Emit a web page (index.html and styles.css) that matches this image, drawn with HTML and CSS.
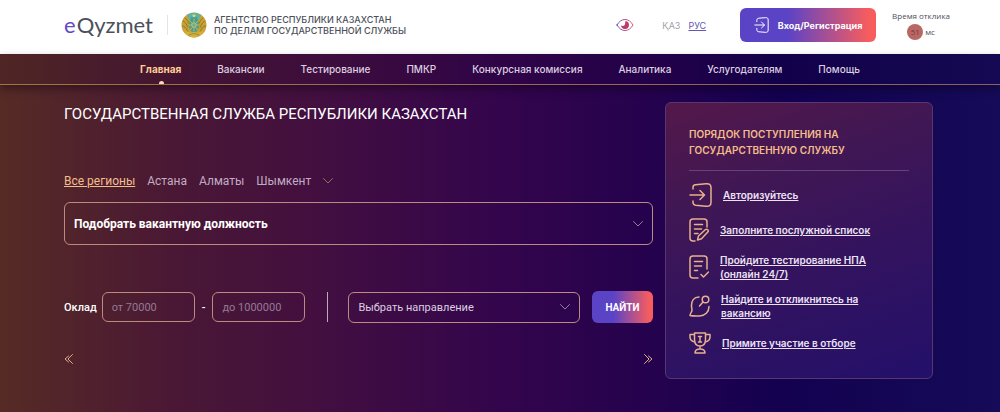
FILE: index.html
```html
<!DOCTYPE html>
<html lang="ru">
<head>
  <meta charset="UTF-8">
  <meta name="viewport" content="width=device-width, initial-scale=1">
  <title>eQyzmet</title>
  <link rel="stylesheet" href="styles.css">
</head>
<body>
  <header class="header">
    <a class="logo" href="#"><span class="logo-e">e</span>Qyzmet</a>
    <div class="agency">
      <svg class="emblem" viewBox="0 0 26 26" aria-hidden="true">
        <circle cx="13" cy="13" r="12.5" fill="#c9a035"/>
        <path d="M6 3.500C10-.2 16-.2 20 3.500L17 8H9z" fill="#55b5ae"/>
        <ellipse cx="13" cy="13" rx="5.500" ry="7.500" fill="#6a9d70"/>
        <path d="M10 5h6l1 9-4 6-4-6z" fill="#3f9f9b"/>
        <path d="M13 7v12M9 9l8 9M17 9l-8 9M8 13h10" stroke="#d8bd55" stroke-width=".8"/>
        <circle cx="13" cy="13" r="2.300" fill="#58b3aa" stroke="#e3c04c" stroke-width=".8"/>
        <path d="M2 9c2 1 4 3 4.500 6M1.500 14c2 0 4 2 5 5M4 6c2 1 3 3 3.500 5M24 9c-2 1-4 3-4.500 6M24.500 14c-2 0-4 2-5 5M22 6c-2 1-3 3-3.500 5" fill="none" stroke="#8f7b22" stroke-width="1"/>
        <path d="M3 17c3 4 6 4 10 3 4 1 7 1 10-3-1.500 5-5 8.500-10 8.500S4.500 22 3 17z" fill="#dcae33"/>
        <path d="M8 23c3-1.500 7-1.500 10 0" fill="none" stroke="#7b9a60" stroke-width="1.200"/>
        <path d="M13 1.500l.7 1.500h1.500l-1.200 1 .4 1.500-1.400-.8-1.400.8.4-1.500-1.200-1h1.500z" fill="#f0d060"/>
      </svg>
      <p class="agency-name">АГЕНТСТВО РЕСПУБЛИКИ КАЗАХСТАН<br>ПО ДЕЛАМ ГОСУДАРСТВЕННОЙ СЛУЖБЫ</p>
    </div>
    <div class="header-tools">
      <button class="eye" type="button" aria-label="Версия для слабовидящих">
        <svg width="18" height="14" viewBox="0 0 18 14" fill="none">
          <defs>
            <linearGradient id="eyeGradient" x1="0" x2="1">
              <stop offset="0" stop-color="#6656b8"/>
              <stop offset="1" stop-color="#dc5570"/>
            </linearGradient>
          </defs>
          <path d="M1 7c2-3.500 4.800-5.500 8-5.500S15 3.500 17 7c-2 3.500-4.800 5.500-8 5.500S3 10.500 1 7z" stroke="url(#eyeGradient)"/>
          <path d="M9.500 3A4 4 0 1 1 5 7.500c1.500.8 2.700.5 3.500-.3C9.500 6.200 9 4.500 9.500 3z" fill="#bd3a68"/>
        </svg>
      </button>
      <nav class="langs">
        <a class="lang" href="#">ҚАЗ</a>
        <a class="lang active" href="#">РУС</a>
      </nav>
      <button class="login" type="button">
        <svg width="15" height="16" viewBox="0 0 22 24" fill="none" stroke="currentColor" stroke-width="1.500" stroke-linecap="round" stroke-linejoin="round">
          <path d="M4 7V5c0-2 1-3 3-3.200l10-.8c3-.2 4 1 4 3.500v15c0 2.500-1 3.700-4 3.500l-10-.8C5 22 4 21 4 19v-2M1 12h14M11 7.500l4.500 4.500-4.500 4.500"/>
        </svg>
        Вход/Регистрация
      </button>
      <div class="response">
        <span>Время отклика</span>
        <span class="response-value"><b class="ms">51</b> мс</span>
      </div>
    </div>
  </header>

  <main class="page">
    <nav class="menu">
      <a class="menu-link active" href="#">Главная</a>
      <a class="menu-link" href="#">Вакансии</a>
      <a class="menu-link" href="#">Тестирование</a>
      <a class="menu-link" href="#">ПМКР</a>
      <a class="menu-link" href="#">Конкурсная комиссия</a>
      <a class="menu-link" href="#">Аналитика</a>
      <a class="menu-link" href="#">Услугодателям</a>
      <a class="menu-link" href="#">Помощь</a>
    </nav>

    <div class="content">
      <section class="search">
        <h1>ГОСУДАРСТВЕННАЯ СЛУЖБА РЕСПУБЛИКИ КАЗАХСТАН</h1>

        <div class="regions">
          <a class="region active" href="#">Все регионы</a>
          <a class="region" href="#">Астана</a>
          <a class="region" href="#">Алматы</a>
          <a class="region" href="#">Шымкент</a>
          <button class="more" type="button" aria-label="Ещё регионы">
            <svg width="10" height="6" viewBox="0 0 10 6"><path d="M.5.5L5 5 9.500.5"/></svg>
          </button>
        </div>

        <div class="select select-position">
          <select aria-label="Вакантная должность">
            <option>Подобрать вакантную должность</option>
          </select>
          <svg width="10" height="6" viewBox="0 0 10 6"><path d="M.5.5L5 5 9.500.5"/></svg>
        </div>

        <form class="filters">
          <div class="salary">
            <label for="from">Оклад</label>
            <input id="from" type="text" placeholder="от 70000">
            <label class="dash" for="to" aria-label="Оклад до">-</label>
            <input id="to" type="text" placeholder="до 1000000">
          </div>
          <div class="divider"></div>
          <div class="select select-direction">
            <select aria-label="Направление">
              <option>Выбрать направление</option>
            </select>
            <svg width="10" height="6" viewBox="0 0 10 6"><path d="M.5.5L5 5 9.500.5"/></svg>
          </div>
          <button class="find" type="submit">НАЙТИ</button>
        </form>

        <div class="pager">
          <button type="button" aria-label="Назад">
            <svg width="9" height="10" viewBox="0 0 9 10"><path d="M4.500 2L1 5l3.500 3M8.500.5L4 5l4.500 4.500"/></svg>
          </button>
          <button type="button" aria-label="Вперёд">
            <svg width="9" height="10" viewBox="0 0 9 10"><path d="M4.500 2L8 5 4.500 8M.5.5L5 5 .5 9.500"/></svg>
          </button>
        </div>
      </section>

      <aside class="steps">
        <h2>ПОРЯДОК ПОСТУПЛЕНИЯ НА ГОСУДАРСТВЕННУЮ СЛУЖБУ</h2>
        <ul>
          <li>
            <svg width="23" height="24" viewBox="0 0 23 24">
              <path d="M4 6V4.500C4 3 5 2 6.500 1.800L17 .8c3-.3 5 .7 5 3.700v15c0 3-2 4-5 3.700l-10.500-1C5 22 4 21 4 19.500V18M1 12h14M11 7.500l4.500 4.500-4.500 4.500"/>
            </svg>
            <a href="#">Авторизуйтесь</a>
          </li>
          <li>
            <svg width="20" height="24" viewBox="0 0 20 24">
              <path d="M18 9V4c0-2-1-3-3-3H4C2 1 1 2 1 4v16c0 2 1 3 3 3h2M5.500 6.500h8M5.500 11h7M5.500 15.500h3.500M8.500 22l1-4 7-6.500c1.500-1 3.500.8 2.500 2.300l-6.500 7z"/>
            </svg>
            <a href="#">Заполните послужной список</a>
          </li>
          <li>
            <svg width="20" height="24" viewBox="0 0 20 24">
              <path d="M18 14V4c0-2-1-3-3-3H4C2 1 1 2 1 4v16c0 2 1 3 3 3h5M5.500 6.500h8M5.500 11h7M5.500 15.500h3M12 19.500l2.500 2.500 5-5"/>
            </svg>
            <a href="#">Пройдите тестирование НПА (онлайн 24/7)</a>
          </li>
          <li>
            <svg width="21" height="22" viewBox="0 0 21 22">
              <path d="M10 2C5 2 2.500 6 2.500 10.500c0 2 .5 3 .5 4.500 0 2-2 3.500-2 5.500 3 .7 6 .5 9.500.5 5.500 0 9.500-4 9.500-9.500M14 7L10.500 11"/>
              <circle cx="16.500" cy="4.500" r="3.300"/>
            </svg>
            <a href="#">Найдите и откликнитесь на вакансию</a>
          </li>
          <li>
            <svg width="22" height="22" viewBox="0 0 22 22">
              <path d="M5.500 1h11v6.500c0 4-2 6.500-5.500 6.500s-5.500-2.500-5.500-6.500zM5.500 2.500H1V5c0 3 2 4.500 5 5M16.500 2.500H21V5c0 3-2 4.500-5 5M11 14v3M6 21c0-2.500 1.500-4 5-4s5 1.500 5 4zM9.500 4.500h3M11 4.500v5.500M9.500 10h3"/>
            </svg>
            <a href="#">Примите участие в отборе</a>
          </li>
        </ul>
      </aside>
    </div>
  </main>
</body>
</html>
```
FILE: styles.css
```css
* {
  box-sizing: border-box;
}
body {
  margin: 0;
  min-height: 100vh;
  display: flex;
  flex-direction: column;
  font-family: Inter, "Noto Sans", sans-serif;
  font-size: 10px;
  color: #fff;
}
a {
  color: inherit;
  text-decoration: none;
}
button, input, select {
  font: inherit;
  color: inherit;
}
button {
  padding: 0;
  border: none;
  background: none;
  cursor: pointer;
}
h1, h2, p, ul {
  margin: 0;
  padding: 0;
}

/* header */
.header {
  display: flex;
  align-items: center;
  height: 54px;
  padding: 0 50px 4px 64px;
  background: #fff;
  color: #4c4f5a;
}
.logo {
  font-family: Lato, sans-serif;
  font-size: 22px;
  line-height: 26px;
}
.logo-e {
  color: #6247c8;
  margin-right: 1px;
}
.agency {
  display: flex;
  align-items: center;
  gap: 7px;
  margin-left: 14px;
}
.agency::before {
  content: "";
  width: 1px;
  height: 20px;
  margin-right: 6px;
  background: #e4e4e8;
}
.emblem {
  width: 26px;
  height: 26px;
}
.agency-name {
  font-size: 9px;
  font-weight: 500;
  line-height: 11px;
}
.header-tools {
  display: flex;
  align-items: center;
  margin-left: auto;
}
.eye {
  display: flex;
}
.langs {
  display: flex;
  gap: 8px;
  margin: 0 34px 0 28px;
  font-size: 9px;
}
.lang {
  color: #a0a0a8;
}
.lang.active {
  color: #6558b4;
  text-decoration: underline;
}
.login {
  display: flex;
  align-items: center;
  justify-content: center;
  gap: 9px;
  width: 136px;
  height: 34px;
  border-radius: 6px;
  background: linear-gradient(90deg, #5b43c6 35%, #f85d5e 95%);
  color: #fff;
  font-size: 9px;
  font-weight: 700;
}
.response {
  display: flex;
  flex-direction: column;
  align-items: center;
  gap: 2px;
  margin-left: 16px;
  font-family: "Open Sans", sans-serif;
  font-size: 8px;
  line-height: 12px;
}
.response-value {
  display: flex;
  align-items: center;
  gap: 2px;
}
.ms {
  width: 16px;
  height: 16px;
  border-radius: 50%;
  background: #b96765;
  color: #713d40;
  font-weight: 400;
  line-height: 16px;
  text-align: center;
}

/* page */
.page {
  flex: 1;
  background: linear-gradient(90deg, #562b25 0%, #4a1834 17%, #420f40 32%, #33054c 50%, #25024e 65%, #130150 78%, #150b58 100%);
}
.menu {
  display: flex;
  justify-content: center;
  gap: 36px;
  height: 31px;
  border-bottom: 1px solid #a87850;
  border-image: linear-gradient(90deg, #a8733a, #8a6068) 1;
  background: rgba(20, 0, 30, 0.1);
  box-shadow: 0 4px 8px rgba(10, 0, 20, 0.4);
}
.menu-link {
  position: relative;
  color: #dccfe0;
  font-weight: 500;
  line-height: 31px;
}
.menu-link.active {
  color: #ffcf96;
  font-weight: 700;
}
.menu-link.active::after {
  content: "";
  position: absolute;
  left: 50%;
  bottom: 0;
  width: 5px;
  height: 3px;
  margin-left: -2px;
  border-radius: 3px 3px 0 0;
  background: #ffd9b8;
}
.content {
  display: grid;
  grid-template-columns: 1fr 268px;
  gap: 12px;
  align-items: start;
  padding: 17px 67px 32px 64px;
}

/* vacancy search */
.search {
  font-family: Roboto, "Noto Sans", sans-serif;
  font-size: 11px;
}
h1 {
  padding-top: 2px;
  font-size: 15px;
  font-weight: 400;
  line-height: 20px;
}
.regions {
  display: flex;
  gap: 12px;
  margin-top: 49px;
  color: #c2acc4;
  font-size: 12px;
  line-height: 16px;
}
.region.active {
  color: #f3bd8c;
  text-decoration: underline;
}
svg path, svg circle {
  stroke-linecap: round;
  stroke-linejoin: round;
}
.more {
  display: flex;
  align-items: center;
}
.more svg, .select svg, .pager svg {
  fill: none;
  stroke: #9a6a5c;
}
.select {
  position: relative;
}
.select select {
  display: block;
  width: 100%;
  height: 100%;
  padding: 0 28px 0 9px;
  appearance: none;
  border: 1px solid #bd8a80;
  border-radius: 6px;
  background: transparent;
}
.select option {
  color: #222;
}
.select svg {
  position: absolute;
  top: 50%;
  right: 10px;
  margin-top: -3px;
  stroke: #9a7c9c;
  pointer-events: none;
}
.select-position {
  height: 43px;
  margin-top: 13px;
  font-size: 12px;
  font-weight: 700;
}
.filters {
  display: flex;
  align-items: center;
  margin-top: 46px;
}
.salary {
  display: flex;
  align-items: center;
  gap: 5px;
  font-weight: 500;
}
.salary input {
  width: 93px;
  height: 30px;
  padding: 0 9px;
  border: 1px solid #bd8a80;
  border-radius: 6px;
  background: transparent;
  font-weight: 400;
}
.salary input::placeholder {
  color: #947a96;
}
.dash {
  padding: 0 2px;
}
.divider {
  width: 1px;
  height: 30px;
  margin: 0 20px 0 22px;
  background: #c0a8b8;
}
.select-direction {
  flex: 1;
  height: 31px;
  color: #dccfe0;
}
.find {
  width: 61px;
  height: 32px;
  margin-left: 12px;
  border-radius: 6px;
  background: linear-gradient(90deg, #5b43c6 35%, #f85d5e 95%);
  font-size: 10px;
  font-weight: 700;
}
.pager {
  display: flex;
  justify-content: space-between;
  margin-top: 31px;
}
.pager button {
  display: flex;
}
.pager svg {
  stroke: #e0ac88;
}

/* admission steps */
.steps {
  padding: 23px;
  border: 1px solid #59366e;
  border-radius: 6px;
  background: linear-gradient(160deg, #54184a 0%, #401754 30%, #33135f 60%, #23106a 100%);
}
h2 {
  padding-bottom: 12px;
  border-bottom: 1px solid #68427a;
  color: #f3bd8c;
  font-size: 10px;
  font-weight: 600;
  line-height: 16px;
}
.steps ul {
  display: flex;
  flex-direction: column;
  gap: 11px;
  margin-top: 12px;
  list-style: none;
}
.steps li {
  display: flex;
  align-items: center;
  gap: 11px;
  min-height: 24px;
}
.steps svg {
  flex: none;
  fill: none;
  stroke: #e8b08c;
  stroke-width: 1.5;
}
.steps a {
  max-width: 160px;
  color: #ece2f4;
  font-size: 10px;
  font-weight: 600;
  line-height: 14px;
  text-decoration: underline;
}
```
